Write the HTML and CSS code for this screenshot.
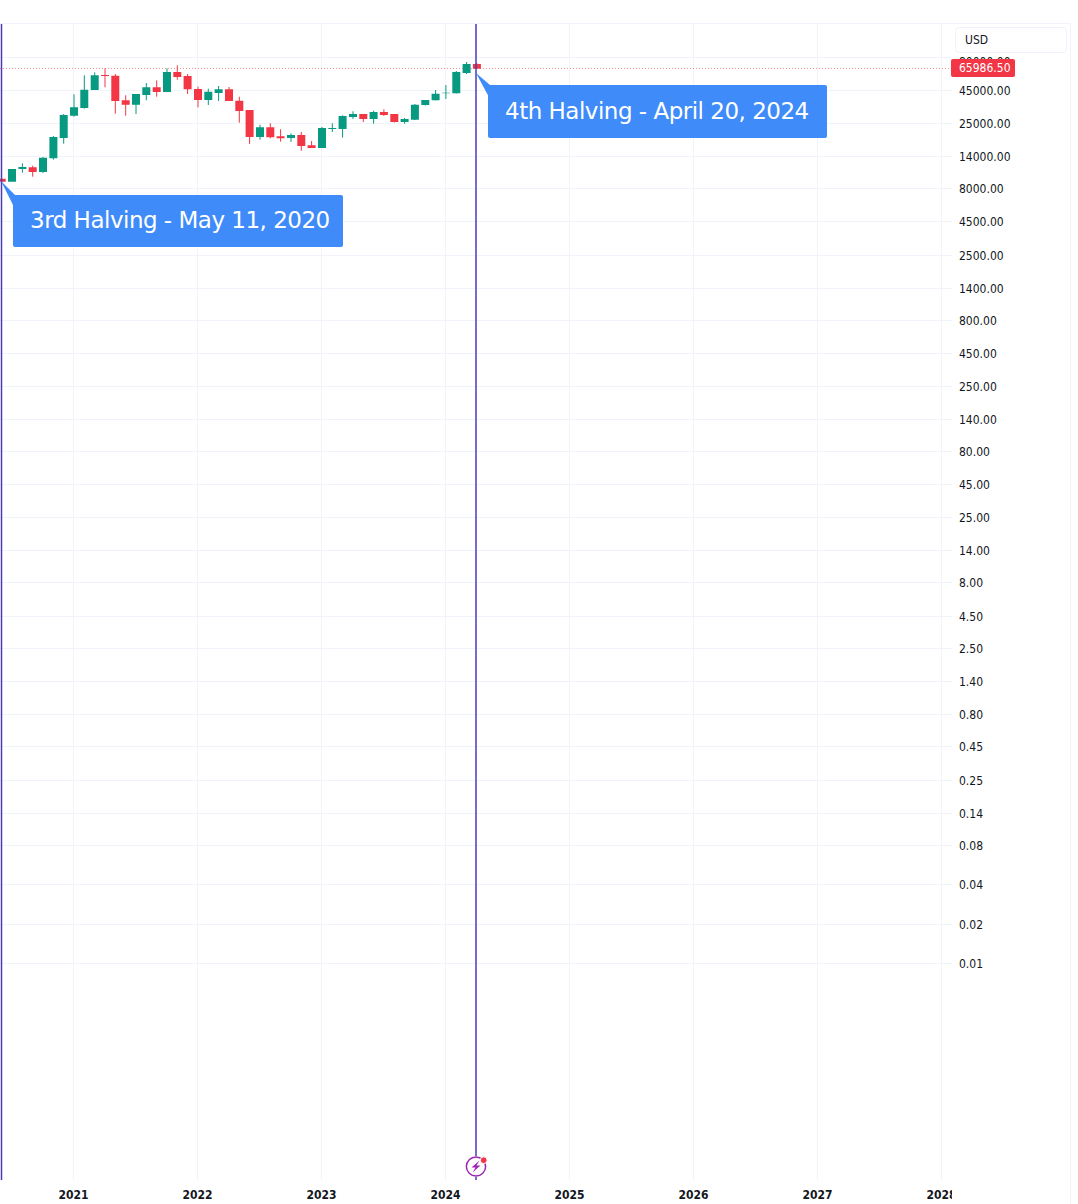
FILE: index.html
```html
<!DOCTYPE html>
<html lang="en">
<head>
<meta charset="utf-8">
<title>BTCUSD halving chart</title>
<link rel="stylesheet" href="styles.css">
</head>
<body>
<main class="chart">
  <section class="pane">
    <svg class="canvas" viewBox="0 24 952 1156" width="952" height="1156" aria-hidden="true">
      <path class="grid" d="M73.5 24V1180M197.5 24V1180M321.5 24V1180M445.5 24V1180M569.5 24V1180M693.5 24V1180M817.5 24V1180M941.5 24V1180"/>
      <path class="grid" d="M0 57.5H952M0 90.5H952M0 123.5H952M0 156.5H952M0 188.5H952M0 221.5H952M0 255.5H952M0 288.5H952M0 320.5H952M0 353.5H952M0 386.5H952M0 419.5H952M0 451.5H952M0 484.5H952M0 517.5H952M0 550.5H952M0 582.5H952M0 616.5H952M0 648.5H952M0 681.5H952M0 714.5H952M0 746.5H952M0 780.5H952M0 813.5H952M0 845.5H952M0 884.5H952M0 924.5H952M0 963.5H952"/>
      <path class="price-line" d="M0 68.5H952"/>
      <g class="candles">
        <path class="wick up" d="M22.4 163.3V172.7M43 157V173M53.4 136V159.7M63.7 114V143.7M74 94.3V116.7M84.3 75.3V108.7M94.7 72.3V90M136 94V114M146.3 83V100.3M167 68.3V92M208.3 88.7V105M218.6 86V101M260 124.7V139.7M291 133.3V142M322 127V148M332.3 123.3V132M342.6 115.3V137.7M353 111.3V119M373.6 110.7V123.7M404.6 118V123.7M414.9 104V120M425.3 100V105.5M435.6 90V100.3M445.9 85V99M456.3 71V93.5M466.6 62V74"/>
        <path class="body up" d="M12 169V181.7M22.4 167V169M43 157.7V172M53.4 137V158.3M63.7 115V138M74 107.3V115.7M84.3 89.7V108M94.7 75.3V90M136 94V104.7M146.3 87.3V95M167 72V92M208.3 91.7V100M218.6 89.3V93M260 127.3V137M291 135V138M322 128V148M332.3 128V129M342.6 116V129M353 114V117M373.6 112V119M404.6 119V122M414.9 104.7V119.7M425.3 100V105M435.6 93.7V100.3M445.9 92.7V93.3M456.3 72V93.3M466.6 64V73"/>
        <path class="wick down" d="M32.7 165.7V176.7M105 68.3V87.3M115.3 74V113.7M125.7 95.3V115.7M156.7 80.3V96.7M177.3 65.3V79.7M187.6 74V94M198 86.7V107.3M229 87V101M239.3 96.7V122.7M249.6 110V144M270.3 123.3V138.3M280.6 129.3V141.7M301.3 132V150.7M311.6 141V148M363.3 114V122M383.9 109.3V116M394.3 114V122.5M476.9 63V69"/>
        <path class="body down" d="M1.7 178.7V181.7M32.7 167.3V172M105 75V76M115.3 75.7V101M125.7 100.3V104.7M156.7 87.3V92M177.3 72V77M187.6 76V89.3M198 89V100M229 89.3V101M239.3 100.7V111M249.6 110V137M270.3 127.3V137.3M280.6 136.3V138.3M301.3 135V146M311.6 145.3V148M363.3 114V119M383.9 112V115M394.3 114V122M476.9 64V68.7"/>
      </g>
      <path class="halving" d="M1.5 24V1180M476 24V1156M476 1177V1180"/>
      <polygon class="tail" points="1,181 15,195 15,209"/>
      <polygon class="tail" points="476,73 490,85 490,99"/>
      <g class="event">
        <circle class="event-ring" cx="476" cy="1166.5" r="9.6"/>
        <path class="event-bolt" d="M479.5 1160.5L471.5 1167.5H475.5L472.5 1172.5L480.5 1165.5H476.5Z"/>
        <circle class="event-dot" cx="483.7" cy="1160.2" r="3.4"/>
      </g>
    </svg>
    <div class="callout callout-third">3rd Halving - May 11, 2020</div>
    <div class="callout callout-fourth">4th Halving - April 20, 2024</div>
  </section>

  <aside class="price-axis">
    <div class="currency">USD</div>
    <svg class="scale" viewBox="0 24 118 1180" width="118" height="1180" aria-hidden="false">
      <text x="7" y="66">80000.00</text>
      <text x="7" y="95">45000.00</text>
      <text x="7" y="128">25000.00</text>
      <text x="7" y="161">14000.00</text>
      <text x="7" y="193">8000.00</text>
      <text x="7" y="226">4500.00</text>
      <text x="7" y="260">2500.00</text>
      <text x="7" y="293">1400.00</text>
      <text x="7" y="325">800.00</text>
      <text x="7" y="358">450.00</text>
      <text x="7" y="391">250.00</text>
      <text x="7" y="424">140.00</text>
      <text x="7" y="456">80.00</text>
      <text x="7" y="489">45.00</text>
      <text x="7" y="522">25.00</text>
      <text x="7" y="555">14.00</text>
      <text x="7" y="587">8.00</text>
      <text x="7" y="621">4.50</text>
      <text x="7" y="653">2.50</text>
      <text x="7" y="686">1.40</text>
      <text x="7" y="719">0.80</text>
      <text x="7" y="751">0.45</text>
      <text x="7" y="785">0.25</text>
      <text x="7" y="818">0.14</text>
      <text x="7" y="850">0.08</text>
      <text x="7" y="889">0.04</text>
      <text x="7" y="929">0.02</text>
      <text x="7" y="968">0.01</text>
    </svg>
    <div class="last-price">65986.50</div>
  </aside>

  <footer class="time-axis">
    <span>2021</span><span>2022</span><span>2023</span><span>2024</span><span>2025</span><span>2026</span><span>2027</span><span>2028</span>
  </footer>
</main>
</body>
</html>
```
FILE: styles.css
```css
* { box-sizing: border-box; }
html, body { margin: 0; padding: 0; background: #fff; }
body { height: 1204px; overflow: hidden; padding-top: 23px; font-family: "DejaVu Sans Condensed", "DejaVu Sans", sans-serif; font-stretch: condensed; color: #131722; }

.chart {
  position: relative;
  width: 1071px;
  height: 1181px;
  border-top: 1px solid #f0f3fa;
  border-right: 1px solid #f0f3fa;
  display: grid;
  grid-template-columns: 952px 118px;
  grid-template-rows: 1156px 24px;
}

.pane { position: relative; grid-column: 1; grid-row: 1; overflow: hidden; }
.canvas { display: block; }
.grid { fill: none; stroke: #f0f3fa; stroke-width: 1; }
.price-line { fill: none; stroke: #f23645; stroke-width: 1; stroke-dasharray: 1 2; opacity: 0.55; }
.candles { filter: blur(0.3px); }
.wick { fill: none; stroke-width: 1; }
.body { fill: none; stroke-width: 8; }
.up { stroke: #089981; }
.down { stroke: #f23645; }
.halving { fill: none; stroke: #4a3cb8; stroke-width: 1.5; }
.tail { fill: #3f8bfa; }
.event-ring { fill: #fff; stroke: #9c27b0; stroke-width: 1.5; }
.event-bolt { fill: #9c27b0; }
.event-dot { fill: #f23645; stroke: #fff; stroke-width: 1; }

.callout {
  position: absolute;
  height: 52px;
  padding-left: 17px;
  background: #3f8bfa;
  border-radius: 2px;
  color: #fff;
  font-family: "DejaVu Sans", sans-serif;
  font-stretch: normal;
  font-size: 23px;
  letter-spacing: -0.5px;
  line-height: 51px;
  white-space: nowrap;
}
.callout-third { left: 13px; top: 171px; width: 330px; }
.callout-fourth { left: 488px; top: 61px; width: 339px; height: 53px; line-height: 53px; }

.price-axis { position: relative; grid-column: 2; grid-row: 1 / span 2; }
.scale { display: block; position: absolute; left: 0; top: 0; }
.scale text { font-family: "DejaVu Sans Condensed", "DejaVu Sans", sans-serif; font-stretch: condensed; font-size: 12px; fill: #131722; }
.currency {
  position: absolute;
  left: 3px;
  top: 3px;
  width: 112px;
  height: 26px;
  padding-left: 9px;
  border: 1px solid #f0f3fa;
  border-radius: 4px;
  font-size: 12px;
  line-height: 24px;
  z-index: 1;
}
.last-price {
  position: absolute;
  left: -1px;
  top: 35px;
  width: 64px;
  height: 18px;
  padding-left: 8px;
  background: #f23645;
  border-radius: 2px;
  color: #fff;
  font-size: 12px;
  line-height: 18px;
  z-index: 1;
}

.time-axis {
  grid-column: 1;
  grid-row: 2;
  display: grid;
  grid-template-columns: repeat(8, 124px);
  padding-left: 11.5px;
  overflow: hidden;
  font-size: 12px;
  font-weight: 700;
  line-height: 30px;
  text-align: center;
}
```
